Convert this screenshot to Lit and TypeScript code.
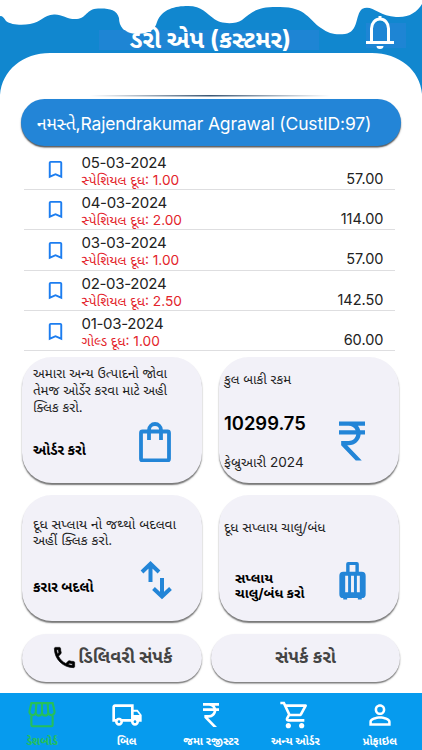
import { LitElement, html, svg, css } from "lit";
import { customElement } from "lit/decorators.js";

const stroke = (d: string, w = 2) =>
  svg`<path d=${d} fill="none" stroke="currentColor" stroke-width=${w} />`;

const icon = (cls: string, body: unknown) =>
  html`<svg class=${cls} viewBox="0 0 24 24">${body}</svg>`;

const bookmark = svg`<path fill="currentColor" d="M17 3H7c-1.1 0-2 .9-2 2v16l7-3 7 3V5c0-1.1-.9-2-2-2zm0 15-5-2.18L7 18V5h10v13z"/>`;
const bag = html`<svg class="art bag" viewBox="0 0 32 40"><path d="M3.500 9.500h25a1.500 1.500 0 0 1 1.500 1.500v26a1.500 1.500 0 0 1-1.500 1.500h-25a1.500 1.500 0 0 1-1.500-1.500v-26a1.500 1.500 0 0 1 1.500-1.500zM10 18V8a6 6 0 0 1 12 0v10" fill="none" stroke="currentColor" stroke-width="3.800"/></svg>`;
const rupee = svg`<path fill="currentColor" d="M13.660 7c-.560-1.180-1.760-2-3.160-2H6V3h12v2h-3.260c.480.580.840 1.260 1.050 2H18v2h-2.020c-.250 2.800-2.610 5-5.480 5h-.730l6.730 7h-2.770L7 14v-2h3.500c1.760 0 3.220-1.300 3.460-3H6V7h7.660z"/>`;
const arrows = html`<svg class="art arrows" viewBox="0 0 31 39"><path d="M10 21V3M1.500 11 10 2.800l8.500 8.200M21.500 17v18M13 27.500l8.500 8 8.500-8" fill="none" stroke="currentColor" stroke-width="4"/></svg>`;
const luggage = html`<svg class="art luggage" viewBox="0 0 27 39"><path fill="currentColor" fill-rule="evenodd" d="M9 0h9a2 2 0 0 1 2 2v8h3a4 4 0 0 1 4 4v19a4 4 0 0 1-4 4v1.500h-4V37H8v1.500H4V37a4 4 0 0 1-4-4V14a4 4 0 0 1 4-4h3V2a2 2 0 0 1 2-2zM10.500 3v7h6V3zM6 14v17h3V14zM12 14v17h3V14zM18 14v17h3V14z"/></svg>`;
const phone = svg`<path fill="currentColor" stroke="currentColor" stroke-width=".6" d="M6.540 5c.060.890.210 1.760.450 2.590l-1.200 1.200c-.410-1.200-.670-2.470-.760-3.790h1.510m9.860 12.020c.850.240 1.720.390 2.600.450v1.490c-1.320-.090-2.590-.350-3.800-.750l1.200-1.190M7.500 3H4c-.550 0-1 .450-1 1 0 9.390 7.610 17 17 17 .550 0 1-.450 1-1v-3.490c0-.550-.450-1-1-1-1.240 0-2.450-.200-3.570-.570-.360-.120-.750-.020-1.020.240l-2.200 2.200c-2.830-1.450-5.150-3.760-6.590-6.590l2.200-2.200c.280-.280.360-.670.250-1.020C8.700 6.450 8.500 5.250 8.500 4c0-.550-.450-1-1-1z"/>`;
const store = stroke("M3.500 2.500h17l1.500 6.500a2.500 2.500 0 0 1-5 1 2.500 2.500 0 0 1-5 0 2.500 2.500 0 0 1-5 0 2.500 2.500 0 0 1-5-1zM7.500 2.500 7 10M12 2.500V10M16.500 2.500 17 10M3.500 11.500V20a1 1 0 0 0 1 1h15a1 1 0 0 0 1-1v-8.500", 1.7);
const cart = svg`<path fill="currentColor" d="M15.550 13c.750 0 1.410-.410 1.750-1.030l3.580-6.490c.370-.660-.110-1.480-.870-1.480H5.210l-.940-2H1v2h2l3.600 7.590-1.350 2.440C4.520 15.370 5.480 17 7 17h12v-2H7l1.100-2h7.450zM6.160 6h12.150l-2.760 5H8.530L6.160 6zM7 18c-1.100 0-1.990.900-1.990 2S5.900 22 7 22s2-.900 2-2-.900-2-2-2zm10 0c-1.100 0-1.990.900-1.990 2s.890 2 1.990 2 2-.900 2-2-.900-2-2-2z"/>`;
const person = svg`<path fill="currentColor" d="M12 5.900a2.100 2.100 0 1 1 0 4.200 2.100 2.100 0 0 1 0-4.200m0 9c2.970 0 6.100 1.460 6.100 2.100v1.100H5.900V17c0-.640 3.130-2.100 6.100-2.100M12 4C9.790 4 8 5.790 8 8s1.790 4 4 4 4-1.790 4-4-1.790-4-4-4zm0 9c-2.670 0-8 1.340-8 4v3h16v-3c0-2.660-5.330-4-8-4z"/>`;
const truck = svg`<path fill="currentColor" d="M20 8h-3V4H3c-1.100 0-2 .900-2 2v11h2c0 1.660 1.340 3 3 3s3-1.340 3-3h6c0 1.660 1.340 3 3 3s3-1.340 3-3h2v-5l-3-4zm-.500 1.500 1.960 2.500H17V9.500h2.500zM6 18c-.550 0-1-.450-1-1s.450-1 1-1 1 .450 1 1-.450 1-1 1zm2.220-3c-.550-.610-1.330-1-2.220-1s-1.670.390-2.220 1H3V6h12v9H8.220zM18 18c-.550 0-1-.450-1-1s.450-1 1-1 1 .450 1 1-.450 1-1 1z"/>`;

const entries = [
  ["05-03-2024", "સ્પેશિયલ દૂધ: 1.00", "57.00"],
  ["04-03-2024", "સ્પેશિયલ દૂધ: 2.00", "114.00"],
  ["03-03-2024", "સ્પેશિયલ દૂધ: 1.00", "57.00"],
  ["02-03-2024", "સ્પેશિયલ દૂધ: 2.50", "142.50"],
  ["01-03-2024", "ગોલ્ડ દૂધ: 1.00", "60.00"],
];

const tabs: [string, unknown, string][] = [
  ["ડેશબોર્ડ", store, "active"],
  ["બિલ", truck, ""],
  ["જમા રજીસ્ટર", rupee, ""],
  ["અન્ય ઓર્ડર", cart, ""],
  ["પ્રોફાઇલ", person, ""],
];

@customElement("app-root")
export class AppRoot extends LitElement {
  static styles = css`
    :host { display: flex; flex-direction: column; width: 422px; height: 750px; overflow: hidden; background: #fff; font-family: Inter, "Noto Sans Gujarati", "Noto Sans", sans-serif; color: #222; }
    * { box-sizing: border-box; }
    svg { display: block; flex: none; }
    .head { position: relative; height: 99px; flex: none; }
    .wave { position: absolute; inset: 0; }
    .title { position: absolute; left: 99px; top: 24px; width: 223px; height: 32px; text-align: center; line-height: 32px; font-size: 24.200px; font-weight: 700; color: #fff; white-space: nowrap; }
    .bell { position: absolute; left: 366px; top: 15px; }
    .banner { height: 47px; flex: none; margin: 0 21px; border-radius: 24px; background: #2385d7; color: #fff; font-size: 17.500px; letter-spacing: -0.150px; line-height: 49px; padding-left: 16px; white-space: nowrap; box-shadow: 0 1.500px 1.500px #555; }
    .list { margin: 3.500px 27px 0 24px; flex: none; }
    .row { display: flex; height: 40.400px; border-bottom: 1.500px solid #dedee0; padding: 4px 11.500px 0 20px; }
    .mark { width: 23px; height: 23px; margin-top: 4.500px; color: #1c7df0; }
    .info { flex: 1; padding-left: 14.500px; white-space: nowrap; }
    .date { font-size: 15px; line-height: 18px; letter-spacing: -0.300px; }
    .item { font-size: 13.700px; line-height: 17px; color: #e3242b; }
    .amt { font-size: 14.500px; line-height: 18px; padding-top: 16px; }
    .cards { display: grid; grid-template-columns: 180px 180px; grid-auto-rows: 126px; gap: 12px 17px; margin: 6px 0 0 22px; flex: none; }
    .card { border-radius: 30px; background: #f2f1f8; box-shadow: 0 2px 1.500px #777; padding: 8px 11px; display: flex; flex-direction: column; white-space: nowrap; font-size: 13.300px; line-height: 16.600px; color: #222; }
    .card.right { padding-left: 5px; padding-right: 33px; }
    .foot { display: flex; justify-content: space-between; align-items: flex-start; flex: 1; }
    .art { color: #2385d7; }
    .strong { font-weight: 700; color: #000; font-size: 14px; }
    .bag { width: 32px; height: 40px; margin: 7px 20px 0 0; }
    .bagtext { margin-top: 27px; }
    .total { font-size: 18.400px; font-weight: 600; color: #000; line-height: 22px; }
    .money { width: 52px; height: 52px; margin: 27px -12px 0 0; }
    .stack { display: flex; flex-direction: column; gap: 20px; padding-top: 24px; }
    .month { font-size: 13.600px; }
    .card.c2 { padding-top: 14px; }
    .card.c3 { padding-top: 21px; font-size: 13.700px; line-height: 16px; }
    .card.c4 { padding-top: 24px; font-size: 13.500px; line-height: 16px; }
    .arrows { width: 32px; height: 39px; margin: 13px 19px 0 0; }
    .c3text { margin-top: 31px; }
    .luggage { width: 27px; height: 38px; margin-top: 27px; }
    .c4text { margin: 36px 0 0 11px; line-height: 15px; font-size: 13.700px; }
    .buttons { display: flex; gap: 9px; margin: 12.500px 0 0 22px; flex: none; }
    .btn { height: 48px; border-radius: 24px; background: #f2f1f8; box-shadow: 0 1.500px 1.500px #777; display: flex; justify-content: center; align-items: center; font-size: 17.700px; font-weight: 700; color: #444; white-space: nowrap; width: 180px; }
    .btn.wide { width: 189px; }
    .phone { width: 27px; height: 27px; color: #000; }
    .tabs { margin-top: auto; height: 57px; flex: none; background: #069bee; display: grid; grid-template-columns: repeat(5, 1fr); color: #fff; }
    .tab { display: flex; flex-direction: column; align-items: center; font-size: 11px; font-weight: 700; line-height: 14px; padding-top: 6px; white-space: nowrap; }
    .ti { width: 32px; height: 32px; margin-bottom: 3px; }
    .tab.active { color: #25c05a; }
    .tab.active .ti { width: 30px; }
  `;

  render() {
    return html`
      <div class="head">
        <svg class="wave" width="422" height="99" viewBox="0 0 422 99">
          <defs><linearGradient id="g"><stop offset="0" stop-color="#3b5673" stop-opacity="0"/><stop offset=".5" stop-color="#3b5673"/><stop offset="1" stop-color="#3b5673" stop-opacity="0"/></linearGradient></defs>
          <path fill="#1187cf" d="M0 16C3 16 4 18 6 21C11 25 22 25.500 30 24C42 22 43 15 54 14.500C62 14 68 20 77 19C87 18 86 9 98 8.500C107 8 117 9 119 18C119 26 124 34 136 34C147 34 155 31 157 22C162 9 175 6 188 6C202 6 207 14 213 18C220 24 234 25 242 20C252 12 256 7 277 7C306 6 309 20 321 28C329 34 336 35 345 34C359 32 355 15 362 9C372 4 378 16 396 17C409 18 417 12 422 4V94C420 70 399 53 372 53H50C23 53 2 70 0 95Z"/>
          <path fill="#2284d4" opacity=".8" d="M99 30h26c4 4 14 5 22 3l8-3h164v20H99zM366 23h40v25h-40z"/>
          <rect x="90" y="95" width="240" height="1.500" fill="url(#g)"/>
        </svg>
        <div class="title">ડેરી એપ (કસ્ટમર)</div>
        <svg class="bell" width="28" height="35" viewBox="0 0 28 35" fill="none" stroke="#fff" stroke-width="3"><path d="M5.500 27V13.500a8.500 9.500 0 0 1 17 0V27M0 27.500h28M14 4.500V1"/><path d="M10.500 31h7a3.500 3 0 0 1-7 0z" fill="#fff" stroke="none"/></svg>
      </div>
      <div class="banner">નમસ્તે,Rajendrakumar Agrawal (CustID:97)</div>
      <div class="list">
        ${entries.map(([d, i, a]) => html`<div class="row">${icon("mark", bookmark)}<div class="info"><div class="date">${d}</div><div class="item">${i}</div></div><div class="amt">${a}</div></div>`)}
      </div>
      <div class="cards">
        <div class="card"><div>અમારા અન્ય ઉત્પાદનો જોવા<br>તેમજ ઓર્ડેર કરવા માટે અહી<br>ક્લિક કરો.</div>
          <div class="foot"><div class="strong bagtext">ઓર્ડર કરો</div>${bag}</div></div>
        <div class="card right c2"><div>કુલ બાકી રકમ</div>
          <div class="foot"><div class="stack"><div class="total">10299.75</div><div class="month">ફેબ્રુઆરી 2024</div></div>${icon("art money", rupee)}</div></div>
        <div class="card c3"><div>દૂધ સપ્લાય નો જથ્થો બદલવા<br>અહીં ક્લિક કરો.</div>
          <div class="foot"><div class="strong c3text">કરાર બદલો</div>${arrows}</div></div>
        <div class="card right c4"><div>દૂધ સપ્લાય ચાલુ/બંધ</div>
          <div class="foot"><div class="strong c4text">સપ્લાય<br>ચાલુ/બંધ કરો</div>${luggage}</div></div>
      </div>
      <div class="buttons">
        <div class="btn">${icon("phone", phone)}<span>ડિલિવરી સંપર્ક</span></div>
        <div class="btn wide"><span>સંપર્ક કરો</span></div>
      </div>
      <div class="tabs">
        ${tabs.map(([l, p, c]) => html`<div class="tab ${c}">${icon("ti", p)}<span>${l}</span></div>`)}
      </div>
    `;
  }
}
